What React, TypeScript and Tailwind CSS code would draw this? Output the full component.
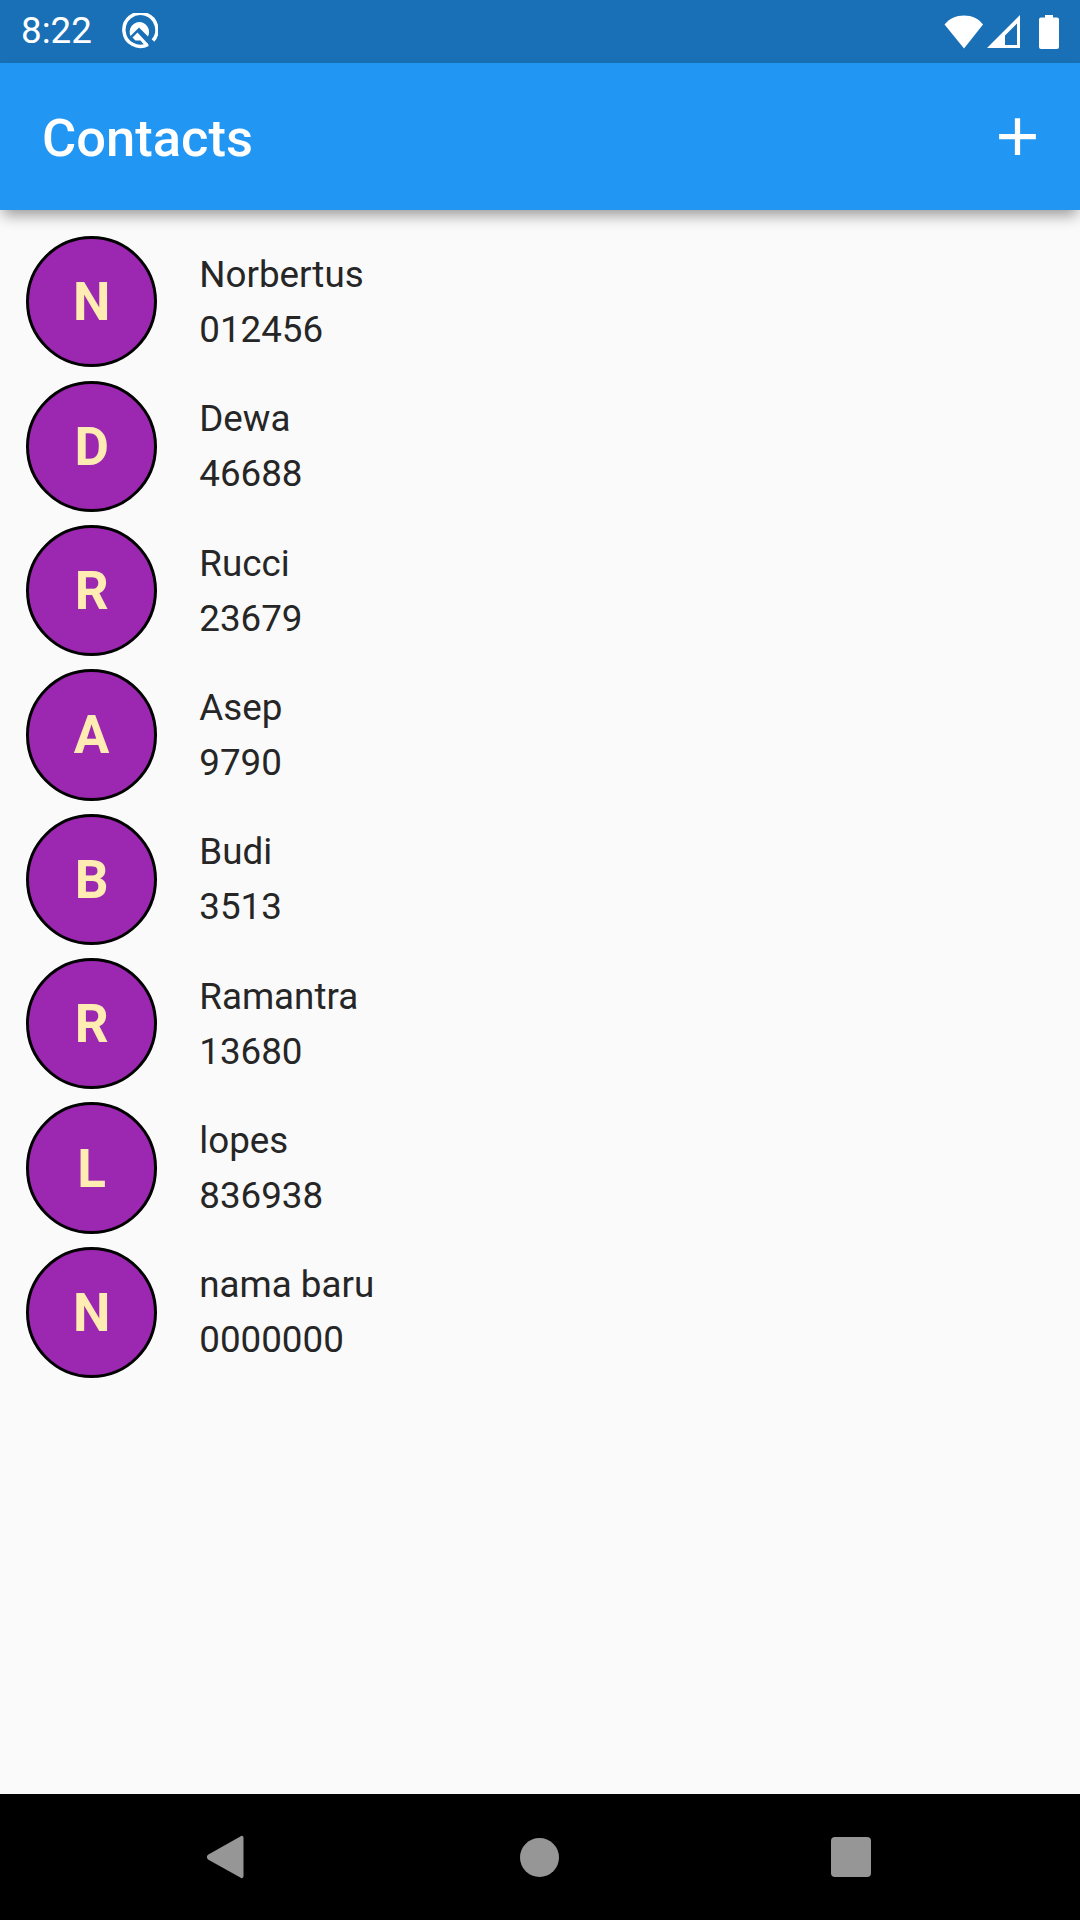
const contacts = [
    { name: 'Norbertus', phone: '012456' },
    { name: 'Dewa', phone: '46688' },
    { name: 'Rucci', phone: '23679' },
    { name: 'Asep', phone: '9790' },
    { name: 'Budi', phone: '3513' },
    { name: 'Ramantra', phone: '13680' },
    { name: 'lopes', phone: '836938' },
    { name: 'nama baru', phone: '0000000' },
];

const StatusBar = () => (
    <div className="flex h-[63px] shrink-0 items-center bg-[#1970b6] px-[21px] text-white">
        <span className="text-[36.75px] leading-none">8:22</span>
        {/* Android Q beta badge */}
        <svg className="ml-[28px]" width="38" height="38" viewBox="0 0 38 38" fill="none">
            <path d="M28 31.500A16.500 16.500 0 1 1 33 27.500" stroke="#fff" strokeWidth="3.500" />
            <path d="M19 9a10 10 0 0 1 9 14.500L19 14.500l-8.500 8.500A10 10 0 0 1 19 9z" fill="#fff" />
            <path d="M12.500 24.500L17.500 19.500l11 12-2.500 2.500-5.500-6.500h-5z" fill="#fff" />
        </svg>
        <div className="ml-auto flex items-center">
            <svg width="40" height="34" viewBox="0 0 40 34">
                <path d="M0.500 9.500C5.500 3.500 12 0.500 20 0.500s14.500 3 19 9L20 33.500z" fill="#fff" />
            </svg>
            <svg className="ml-[3px]" width="33" height="33" viewBox="0 0 33 33">
                <path fillRule="evenodd" d="M33 0v33H0zM30 8.500L18 20.500V30h12z" fill="#fff" />
            </svg>
            <svg className="ml-[19px]" width="20" height="34" viewBox="0 0 20 34">
                <path
                    d="M6 0h8v2.500h4a2 2 0 0 1 2 2V32a2 2 0 0 1-2 2H2a2 2 0 0 1-2-2V4.500a2 2 0 0 1 2-2h4z"
                    fill="#fff"
                />
            </svg>
        </div>
    </div>
);

const AppBar = () => (
    <div className="relative z-10 flex h-[147px] shrink-0 items-center justify-between bg-[#2196f3] pl-[42px] pr-[31px] shadow-[0_8px_14px_-3px_rgba(0,0,0,0.4)]">
        <h1 className="pt-[3px] text-[52.5px] font-medium leading-none text-white">Contacts</h1>
        <svg className="-mt-[1px]" width="63" height="63" viewBox="0 0 24 24" fill="#fff">
            <path d="M19 13h-6v6h-2v-6H5v-2h6V5h2v6h6v2z" />
        </svg>
    </div>
);

const ContactRow = ({ name, phone }: { name: string; phone: string }) => (
    <div className="flex h-[144.375px] items-center">
        <div className="flex h-[131.25px] w-[131.25px] shrink-0 items-center justify-center rounded-full border-[3px] border-black bg-[#9c27b0] pt-[2px] text-[53px] font-bold leading-none text-[#ffecb3]">
            {name.charAt(0).toUpperCase()}
        </div>
        <div className="ml-[42px] flex flex-col gap-[12px] text-[36.75px] leading-[43px] text-[#262626]">
            <span>{name}</span>
            <span>{phone}</span>
        </div>
    </div>
);

const NavBar = () => (
    <div className="flex h-[126px] shrink-0 items-center bg-black">
        <svg className="ml-[206px]" width="38" height="44" viewBox="0 0 38 44">
            <path
                d="M37.500 3v38c0 2-1.800 2.800-3.200 1.600L2 24.500c-1.500-1.300-1.500-3.400 0-4.700L34.300 1.400C35.700 0.200 37.500 1 37.500 3z"
                fill="#969696"
            />
        </svg>
        <div className="ml-[276px] h-[39px] w-[39px] rounded-full bg-[#969696]" />
        <div className="ml-[272px] h-[40px] w-[40px] rounded-[4px] bg-[#969696]" />
    </div>
);

const App = () => (
    <div className="flex h-[1920px] w-[1080px] flex-col overflow-hidden bg-[#fafafa] font-['Roboto',sans-serif]">
        <StatusBar />
        <AppBar />
        <div className="flex flex-1 flex-col pl-[26px] pt-[19.6px]">
            {contacts.map(contact => (
                <ContactRow key={contact.name} {...contact} />
            ))}
        </div>
        <NavBar />
    </div>
);

export default App;
